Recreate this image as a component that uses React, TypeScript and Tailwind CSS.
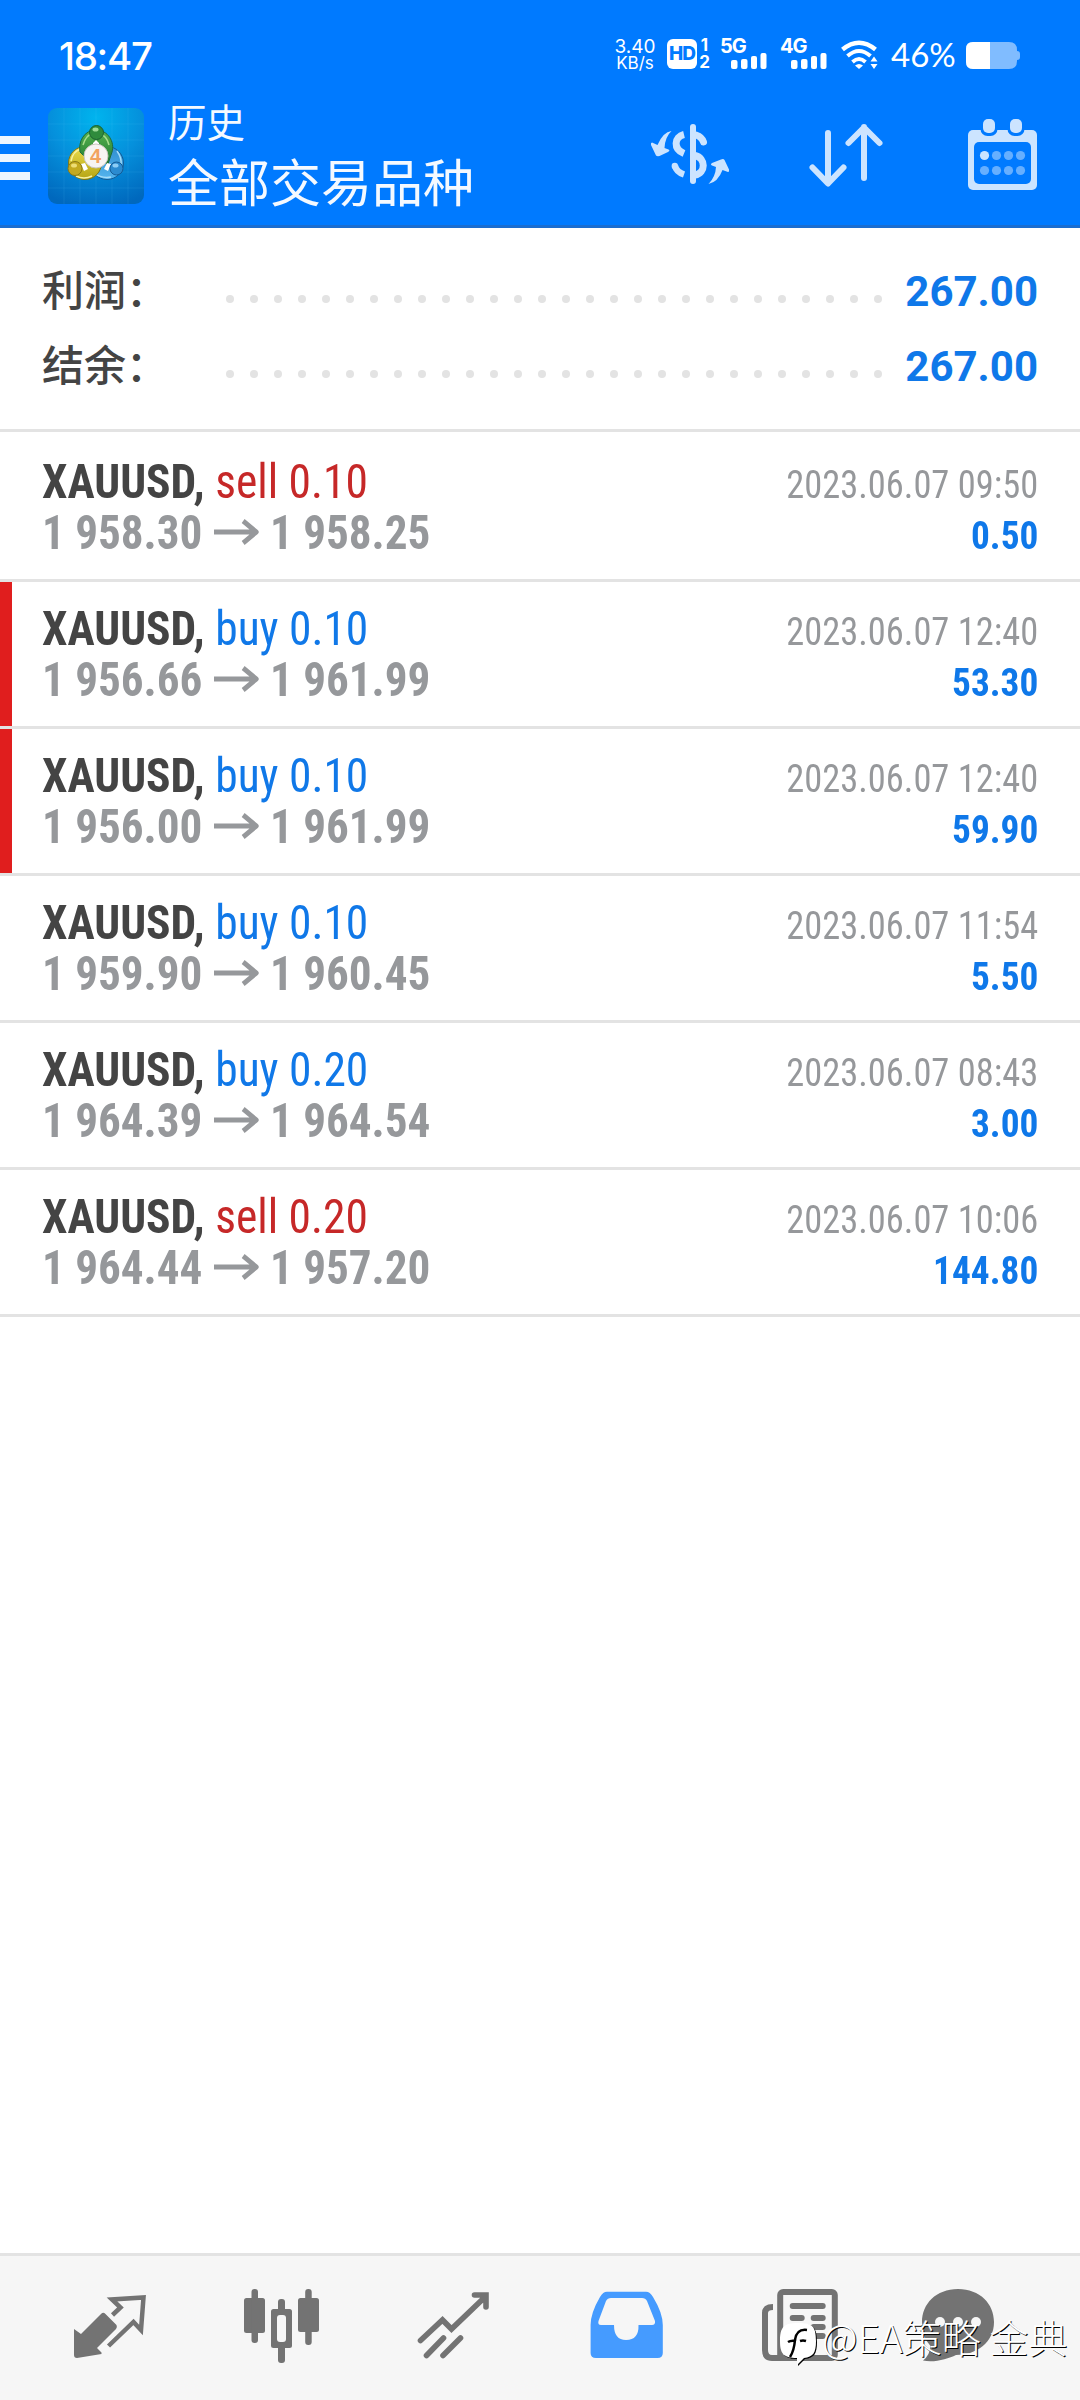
// App.tsx
type Deal = {
  side: 'buy' | 'sell';
  volume: string;
  open: string;
  close: string;
  time: string;
  profit: string;
  marked?: boolean;
};

const deals: Deal[] = [
  { side: 'sell', volume: '0.10', open: '1 958.30', close: '1 958.25', time: '2023.06.07 09:50', profit: '0.50' },
  { side: 'buy', volume: '0.10', open: '1 956.66', close: '1 961.99', time: '2023.06.07 12:40', profit: '53.30', marked: true },
  { side: 'buy', volume: '0.10', open: '1 956.00', close: '1 961.99', time: '2023.06.07 12:40', profit: '59.90', marked: true },
  { side: 'buy', volume: '0.10', open: '1 959.90', close: '1 960.45', time: '2023.06.07 11:54', profit: '5.50' },
  { side: 'buy', volume: '0.20', open: '1 964.39', close: '1 964.54', time: '2023.06.07 08:43', profit: '3.00' },
  { side: 'sell', volume: '0.20', open: '1 964.44', close: '1 957.20', time: '2023.06.07 10:06', profit: '144.80' },
];

const summary = [
  { label: '利润：', value: '267.00' },
  { label: '结余：', value: '267.00' },
];

function Signal({ label }: { label: string }) {
  return (
    <div className="flex h-[30px] w-[48px] flex-col">
      <div className="h-[15px] text-[20px] leading-[15px] font-bold tracking-[-1px]">{label}</div>
      <svg className="ml-[11px] overflow-visible" width="36" height="15" viewBox="0 0 36 15" fill="#fff">
        <rect x="0" y="6" width="6.5" height="9" rx="2" />
        <rect x="10" y="5" width="6.5" height="10" rx="2" />
        <rect x="20" y="2" width="6" height="13" rx="2" />
        <rect x="29.5" y="-1" width="6" height="16" rx="2" />
      </svg>
    </div>
  );
}

function StatusBar() {
  return (
    <div className="flex h-[108px] items-start pt-[39px] pl-[59px] font-['Lato'] text-white">
      <div className="-mt-[2px] w-[557px] font-['Inter'] text-[38.500px] leading-[39px] font-medium tracking-[-1.300px]">18:47</div>
      <div className="flex w-[38px] flex-col items-center font-['Inter'] text-[19px] leading-[15px]">
        <span>3.40</span>
        <span className="mt-[2px] text-[17px] leading-[15px]">KB/s</span>
      </div>
      <div className="ml-[13px] flex h-[30px] w-[30px] items-center justify-center rounded-[6px] bg-white font-['Inter'] text-[19px] font-extrabold tracking-[-1px] text-[#007aff]">
        HD
      </div>
      <div className="ml-[2px] flex w-[11px] flex-col items-center font-['Inter'] text-[17px] leading-[15px] font-bold">
        <span className="-mt-px">1</span>
        <span className="mt-[2px]">2</span>
      </div>
      <div className="ml-[10px] flex gap-[12px] font-['Inter']">
        <Signal label="5G" />
        <Signal label="4G" />
      </div>
      <svg className="ml-[13px]" width="38" height="30" viewBox="841 39 38 30" fill="none" stroke="#fff">
        <path d="M842.5 49.5Q859 36 875.500 49.500" strokeWidth="4.500" />
        <path d="M847.5 56Q859 46 870.500 56" strokeWidth="4" />
        <path d="M852.500 62Q859 56 865.500 62" strokeWidth="3.800" />
        <path d="M855 65.500Q859 62.500 863 65.500L859 69Z" fill="#fff" stroke="none" />
        <path d="M870.500 61.500L874 56.500L877.500 61.500ZM870.500 64L874 69L877.500 64Z" fill="#fff" stroke="none" />
      </svg>
      <div className="-mt-[2px] ml-[12px] w-[75px] text-[33px] leading-[34px]">46%</div>
      <svg className="mt-[3px]" width="54" height="27" viewBox="0 0 54 27">
        <path d="M7 0H43Q51 0 51 8V9Q54 9 54 12V15Q54 18 51 18V19Q51 27 43 27H7Q0 27 0 20V7Q0 0 7 0Z" fill="#80bcff" />
        <path d="M7 0H24V27H7Q0 27 0 20V7Q0 0 7 0Z" fill="#fff" />
      </svg>
    </div>
  );
}

function AppLogo() {
  return (
    <svg width="96" height="96" viewBox="0 0 96 96">
      <defs>
        <radialGradient id="tile" cx="0.5" cy="0.1" r="0.95">
          <stop offset="0" stopColor="#00b4ee" />
          <stop offset="0.5" stopColor="#0590dc" />
          <stop offset="1" stopColor="#0068bd" />
        </radialGradient>
        <linearGradient id="green" x2="0" y2="1">
          <stop offset="0" stopColor="#58b34e" />
          <stop offset="1" stopColor="#1f7a33" />
        </linearGradient>
        <linearGradient id="yellow" x2="0" y2="1">
          <stop offset="0" stopColor="#e9dc4b" />
          <stop offset="1" stopColor="#b6a413" />
        </linearGradient>
        <linearGradient id="sky" x2="0" y2="1">
          <stop offset="0" stopColor="#2f8ed0" />
          <stop offset="1" stopColor="#55b5ee" />
        </linearGradient>
      </defs>
      <rect width="96" height="96" rx="9" fill="url(#tile)" />
      <path d="M16 0V96M32 0V96M48 0V96M64 0V96M80 0V96M0 16H96M0 32H96M0 48H96M0 64H96M0 80H96" stroke="#6fd0f5" strokeOpacity="0.12" />
      <circle cx="59" cy="55" r="16.500" fill="url(#sky)" stroke="#125c96" />
      <path d="M46 65Q54 71 63 69M69 43Q74 50 73 57" stroke="#a5dcf8" strokeWidth="1.500" fill="none" />
      <circle cx="37" cy="55" r="16.500" fill="url(#yellow)" stroke="#7e7615" />
      <path d="M23 53Q25 43 33 41M28 68Q36 72 44 68" stroke="#f8f1a0" strokeWidth="1.500" fill="none" />
      <path d="M32 44C30 34 36 22 48 22C60 22 67 34 64 44L60 56L36 48Z" fill="url(#green)" stroke="#1e6a3c" />
      <path d="M35 37Q38 27 45 25M51 25Q59 28 61 37" stroke="#a8dd8e" strokeWidth="1.500" fill="none" />
      <path d="M45 35L48 32L51 35V38H45ZM33 56L37 55L40 61L36 63ZM63 56L59 55L56 61L60 63Z" fill="#fff" />
      <circle cx="48.500" cy="24.500" r="7" fill="#2f8b3c" stroke="#1b6130" />
      <circle cx="27" cy="60.500" r="7" fill="#c3a91f" stroke="#8a7a17" />
      <circle cx="68.500" cy="60.500" r="6.500" fill="#2b8bd0" stroke="#155c96" />
      <ellipse cx="47.500" cy="21.500" rx="3" ry="2" fill="#9edb97" />
      <ellipse cx="26" cy="57.500" rx="3" ry="2" fill="#eddd75" />
      <ellipse cx="67.500" cy="57.500" rx="3" ry="2" fill="#8dcdf5" />
      <circle cx="48" cy="48" r="12" fill="#f7f4f2" stroke="#c9c5bd" />
      <text x="47.500" y="55" textAnchor="middle" fontFamily="Liberation Sans" fontWeight="700" fontSize="20" fill="#f2a35f">4</text>
    </svg>
  );
}

function CurrencyIcon() {
  return (
    <svg width="80" height="64" viewBox="650 122 80 64" fill="none" stroke="#cce4ff">
      <path d="M693 127V181" strokeWidth="6" strokeLinecap="round" />
      <path d="M684 134.500C674 137 673 149 684 153.500" strokeWidth="7" />
      <path d="M696 135Q702 137 703.500 142" strokeWidth="7" strokeLinecap="round" />
      <path d="M695 155.500C706 158 706 173 695 175" strokeWidth="7" />
      <path d="M675 166Q676.500 172 684 174.500" strokeWidth="6.500" />
      <circle cx="674.800" cy="166" r="3.200" fill="#cce4ff" stroke="none" />
      <path d="M671.500 131Q663 132 657.500 145L652 142.500Q650.500 142.500 651 145L656 155.500Q657 156.500 659.500 156L668 152Q670.500 150.500 668.500 149.500L664.500 148Q665 137 671.500 131Z" fill="#cce4ff" stroke="none" />
      <path d="M708.500 184Q718 182 722.500 170L728 172Q729.500 172 729 169.500L724.500 160Q723.500 158.500 721 159.500L712 163Q710 164.500 712 165.500L716 167Q715.500 177 708.500 184Z" fill="#cce4ff" stroke="none" />
    </svg>
  );
}

function SortIcon() {
  return (
    <svg width="76" height="66" viewBox="808 122 76 66" fill="none" stroke="#cce4ff" strokeWidth="6" strokeLinecap="round" strokeLinejoin="round">
      <path d="M828 133V183M812.500 167.500L828 183.500L843.500 167.500" />
      <path d="M864 178V127M848.500 143L864 127.500L879.500 143" />
    </svg>
  );
}

function CalendarIcon() {
  return (
    <svg width="70" height="72" viewBox="967 118 70 72">
      <rect x="968" y="130" width="69" height="60" rx="5" fill="#cce4ff" />
      <rect x="974" y="142" width="57" height="42" rx="5" fill="#007aff" />
      <rect x="980.500" y="116" width="17" height="20" rx="7" fill="#007aff" />
      <rect x="1007.500" y="116" width="17" height="20" rx="7" fill="#007aff" />
      <rect x="983" y="119" width="12" height="14" rx="5" fill="#cce4ff" />
      <rect x="1010" y="119" width="12" height="14" rx="5" fill="#cce4ff" />
      <circle cx="984.500" cy="155.500" r="4.600" fill="#cce4ff" />
      {[996.5, 1008.5, 1020.5].map((x) => (
        <circle key={x} cx={x} cy="155.500" r="4.600" fill="#66afff" />
      ))}
      {[984.5, 996.5, 1008.5, 1020.5].map((x) => (
        <circle key={x} cx={x} cy="170.500" r="4.600" fill="#66afff" />
      ))}
    </svg>
  );
}

function Toolbar() {
  return (
    <div className="flex h-[117px] items-start text-[#f4f9ff]">
      <div className="mt-[28px] flex w-[30px] flex-col gap-[10px]">
        <div className="h-[8px] bg-[#eef6ff]" />
        <div className="h-[8px] bg-[#eef6ff]" />
        <div className="h-[8px] bg-[#eef6ff]" />
      </div>
      <div className="ml-[18px]">
        <AppLogo />
      </div>
      <div className="-mt-[15px] ml-[24px] w-[482px] font-['Noto_Sans_CJK_SC',sans-serif]">
        <div className="text-[38.500px] leading-[54px]">历史</div>
        <div className="text-[51px] leading-[66px]">全部交易品种</div>
      </div>
      <div className="mt-[14px] w-[158px]">
        <CurrencyIcon />
      </div>
      <div className="mt-[14px] w-[159px]">
        <SortIcon />
      </div>
      <div className="mt-[10px]">
        <CalendarIcon />
      </div>
    </div>
  );
}

function SummaryRow({ label, value }: { label: string; value: string }) {
  return (
    <div className="flex h-[75px] items-center">
      <div className="mb-[3px] w-[184px] font-['Noto_Sans_CJK_SC',sans-serif] text-[42px] leading-[60px] font-medium text-[#444]">{label}</div>
      <div className="mt-[19px] flex w-[656px] justify-between">
        {Array.from({ length: 28 }, (_, i) => (
          <span key={i} className="h-[8px] w-[8px] rounded-full bg-[#e3e3e3]" />
        ))}
      </div>
      <div className="mt-[5px] ml-auto text-[42px] leading-[50px] font-bold text-[#0f78e9]">{value}</div>
    </div>
  );
}

function DealRow({ deal }: { deal: Deal }) {
  const sideColor = deal.side === 'sell' ? 'text-[#c62828]' : 'text-[#1078e8]';
  return (
    <div className="flex h-[147px] border-b-[3px] border-[#e3e3e3]">
      <div className={deal.marked ? 'w-[12px] bg-[#e01e1e]' : 'w-[12px]'} />
      <div className="flex-1 pt-[21px] pr-[42px] pl-[30px] leading-[51px] [font-stretch:75%]">
        <div className="flex h-[51px] items-baseline justify-between">
          <div className="origin-left scale-x-[0.947] text-[48px]">
            <span className="font-bold text-[#444]">XAUUSD, </span>
            <span className={sideColor}>{deal.side} {deal.volume}</span>
          </div>
          <div className="origin-right scale-x-[0.922] text-[39.500px] text-[#96989b]">{deal.time}</div>
        </div>
        <div className="flex h-[51px] items-baseline justify-between font-bold">
          <div className="flex origin-left scale-x-[0.94] items-baseline text-[48px] text-[#96989b]">
            <span>{deal.open}</span>
            <svg className="-mt-[2px] mr-[11px] ml-[12px] self-center" width="49" height="26" viewBox="0 0 49 26" fill="none" stroke="#96989b" strokeWidth="5">
              <path d="M0 13H46M31 2L45 13L31 24" strokeLinejoin="round" />
            </svg>
            <span>{deal.close}</span>
          </div>
          <div className="origin-right scale-x-[0.945] text-[39.500px] text-[#0f78e9]">{deal.profit}</div>
        </div>
      </div>
    </div>
  );
}

function BottomNav() {
  return (
    <div className="relative flex h-[147px] items-start border-t-[3px] border-[#e3e3e3] bg-[#f6f6f6] pt-[29px] pl-[70px]">
      <svg className="mr-[92px]" width="80" height="80" viewBox="70 2285 80 80" fill="#737373">
        <path d="M74 2329L81 2334L101.500 2313.500Q103.500 2312 105.500 2314L116.500 2325Q117.500 2327 116 2329L97 2348L101.500 2352.500V2354L77 2358Q74 2358 74 2355Z" />
        <path d="M112.500 2315L120.500 2307.500L112 2299.500L143.500 2297.500L141 2330L133.500 2322L108.500 2346" fill="none" stroke="#737373" strokeWidth="4.500" />
      </svg>
      <svg className="mr-[93px]" width="80" height="80" viewBox="242 2285 80 80" fill="#737373">
        <rect x="244" y="2298" width="21" height="35" rx="2.500" />
        <rect x="251.500" y="2289" width="6.500" height="54" rx="3" />
        <rect x="298" y="2298" width="21" height="34" rx="2.500" />
        <rect x="305.200" y="2289" width="6.500" height="56" rx="3" />
        <rect x="271" y="2309" width="21" height="39" rx="2.500" />
        <rect x="278" y="2299" width="7" height="64" rx="3" />
        <rect x="277" y="2315" width="9" height="27" rx="3" fill="#f6f6f6" />
      </svg>
      <svg className="mr-[92px]" width="80" height="80" viewBox="415 2285 80 80" fill="none" stroke="#737373" strokeWidth="5.600" strokeLinecap="round">
        <path d="M420.500 2340.500L442.500 2320L451.500 2329L485 2297M474.500 2295H486V2307" />
        <path d="M426.500 2355.500L443.500 2338M443 2355.500L460.500 2338" />
      </svg>
      <svg className="mr-[93px]" width="80" height="80" viewBox="587 2285 80 80">
        <path d="M607 2291.700H646Q650 2291.700 653 2297Q662.800 2313 662.800 2325V2353Q662.800 2358 657.500 2358H596Q590.600 2358 590.600 2353V2325Q590.600 2313 600 2297Q603 2291.700 607 2291.700Z" fill="#459bff" />
        <path d="M611 2298H642Q645.500 2298 647 2301L655 2321Q655.500 2325 652 2325H638.500Q639 2340 626 2340Q614 2340 614 2325H601Q597.500 2325 598.500 2321L606 2301Q607.500 2298 611 2298Z" fill="#f6f6f6" />
      </svg>
      <svg className="mr-[78px]" width="80" height="80" viewBox="760 2285 80 80" fill="#737373">
        <path d="M773 2307Q765 2307 765 2313V2350Q765 2358 772 2358H790" fill="none" stroke="#737373" strokeWidth="6" />
        <rect x="780.200" y="2292" width="54.600" height="66" rx="3" fill="#f6f6f6" stroke="#737373" strokeWidth="6" />
        <rect x="789.700" y="2303" width="36" height="6" rx="3" />
        <rect x="789.700" y="2315" width="15" height="6" rx="3" />
        <rect x="810.700" y="2315" width="15" height="6" rx="3" />
        <rect x="810.700" y="2324" width="15" height="6" rx="3" />
        <rect x="789.700" y="2333" width="36" height="6" rx="3" />
      </svg>
      <svg width="80" height="80" viewBox="918 2285 80 80" fill="#737373">
        <path d="M958 2289C980 2289 994 2304 994 2322C994 2342 977 2355 956 2355C948 2359 934 2363 923 2360.500Q930 2355 930.500 2346Q922 2337 922 2322C922 2304 936 2289 958 2289Z" />
        <circle cx="940" cy="2322" r="5" fill="#f6f6f6" />
        <circle cx="958" cy="2322" r="5" fill="#f6f6f6" />
        <circle cx="976" cy="2322" r="5" fill="#f6f6f6" />
      </svg>
      {/* author stamp over the bar */}
      <div className="absolute top-[49px] left-[779px] flex items-center">
        <svg className="mt-[17px] overflow-visible drop-shadow-[1px_1px_0_#000]" width="38" height="44" viewBox="0 0 38 44">
          <path d="M19 1C34 1 37 5 37 19C37 31 34 35 25 36L18 43V36C4 36 1 31 1 19C1 5 5 1 19 1Z" fill="#fff" />
          <path d="M28 8C20 7 17 11 16 18Q15 29 11 35" stroke="#000" strokeWidth="2.500" fill="none" />
          <path d="M9 20Q12 18 17 19M21 19Q24 18 27 19" stroke="#000" strokeWidth="2.500" fill="none" />
        </svg>
        <span className="ml-[5px] font-['Noto_Sans_CJK_SC',sans-serif] text-[39px] leading-[50px] font-light whitespace-nowrap text-white [text-shadow:1px_1px_0_#000]">
          @EA策略 金典
        </span>
      </div>
    </div>
  );
}

export default function App() {
  return (
    <div className="flex h-[2400px] w-[1080px] flex-col overflow-hidden bg-white font-['Roboto',sans-serif]">
      <header className="h-[228px] border-b-[3px] border-[#1a6dd0] bg-[#007aff]">
        <StatusBar />
        <Toolbar />
      </header>
      <section className="h-[204px] border-b-[3px] border-[#e3e3e3] pt-[24px] pr-[42px] pl-[42px]">
        {summary.map((row) => (
          <SummaryRow key={row.label} label={row.label} value={row.value} />
        ))}
      </section>
      <main className="flex-1 pt-[3px]">
        {deals.map((deal, i) => (
          <DealRow key={i} deal={deal} />
        ))}
      </main>
      <BottomNav />
    </div>
  );
}
